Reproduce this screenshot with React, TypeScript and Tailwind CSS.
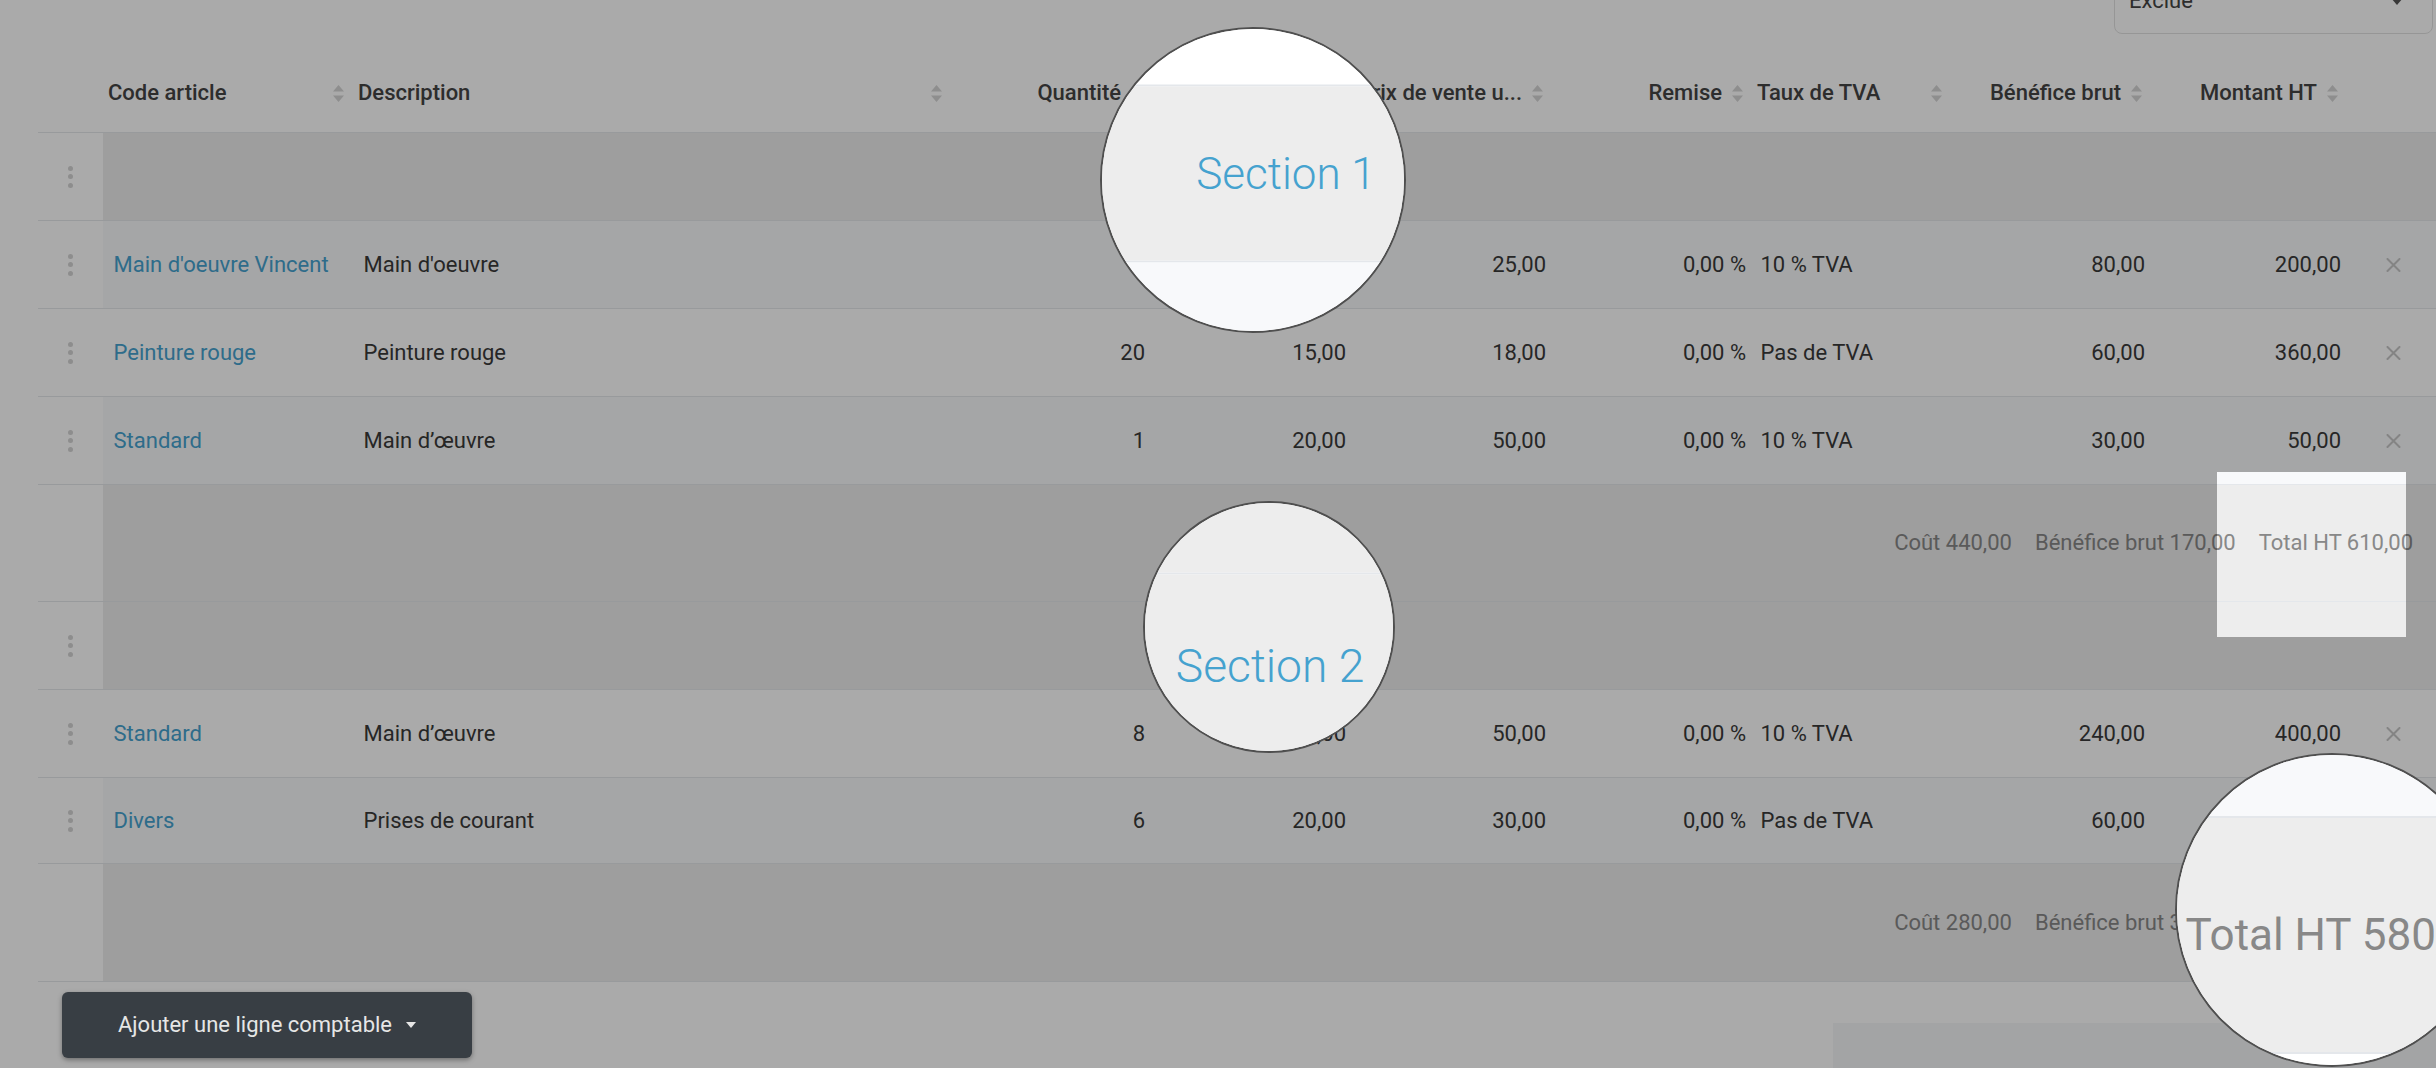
import React from "react";

type Row = {
  code: string;
  desc: string;
  qty: string;
  pa: string;
  pv: string;
  rem: string;
  tva: string;
  ben: string;
  mt: string;
};

const GRID =
  "flex-1 grid grid-cols-[254px_598px_200px_201px_200px_200px_199px_200px_196px_85px] items-center";

function SortIcon() {
  return (
    <svg width="11" height="17" viewBox="0 0 11 17" className="shrink-0">
      <path d="M0 6.5 L5.5 0 L11 6.5 Z" fill="#d6d6d6" />
      <path d="M0 10.5 L11 10.5 L5.5 17 Z" fill="#d6d6d6" />
    </svg>
  );
}

function Handle({ dots }: { dots?: boolean }) {
  return (
    <div className="w-[65px] shrink-0 bg-white flex items-center justify-center">
      {dots && (
        <div className="flex flex-col gap-[3.5px]">
          <span className="block w-[5px] h-[5px] rounded-full bg-[#d4d4d4]" />
          <span className="block w-[5px] h-[5px] rounded-full bg-[#d4d4d4]" />
          <span className="block w-[5px] h-[5px] rounded-full bg-[#d4d4d4]" />
        </div>
      )}
    </div>
  );
}

function DeleteIcon() {
  return (
    <svg width="15" height="14" viewBox="0 0 15 14">
      <path
        d="M1.5 1 L13.5 13 M13.5 1 L1.5 13"
        stroke="#c6c6c6"
        strokeWidth="2"
        strokeLinecap="round"
      />
    </svg>
  );
}

function ItemRow({ r, h, odd }: { r: Row; h: string; odd: boolean }) {
  return (
    <div className={`flex border-b border-[#e4e7eb] ${h}`}>
      <Handle dots />
      <div className={`flex-1 flex ${odd ? "bg-[#f8f9fb]" : "bg-white"}`}>
        <div className={GRID}>
          <div className="pl-[10.5px] text-[#45a2cf] whitespace-nowrap">{r.code}</div>
          <div className="pl-[6.5px] whitespace-nowrap">{r.desc}</div>
          <div className="text-right pr-[10px]">{r.qty}</div>
          <div className="text-right pr-[10px]">{r.pa}</div>
          <div className="text-right pr-[10px]">{r.pv}</div>
          <div className="text-right pr-[10px]">{r.rem}</div>
          <div className="pl-[4.5px] whitespace-nowrap">{r.tva}</div>
          <div className="text-right pr-[10px]">{r.ben}</div>
          <div className="text-right pr-[10px]">{r.mt}</div>
          <div className="flex justify-center">
            <DeleteIcon />
          </div>
        </div>
      </div>
    </div>
  );
}

function SectionRow({ title, h }: { title: string; h: string }) {
  return (
    <div className={`flex border-b border-[#e4e7eb] ${h}`}>
      <Handle dots />
      <div className="flex-1 bg-[#ededed] flex items-center justify-center text-[#45a2cf] font-light">
        {title}
      </div>
    </div>
  );
}

function SubtotalRow({
  cost,
  ben,
  total,
  h,
}: {
  cost: string;
  ben: string;
  total: string;
  h: string;
}) {
  return (
    <div className={`flex border-b border-[#e4e7eb] ${h}`}>
      <Handle />
      <div className="flex-1 bg-[#ededed] flex items-center justify-end gap-[23px] pr-[23px] text-[#888888] whitespace-nowrap">
        <span>Coût {cost}</span>
        <span>Bénéfice brut {ben}</span>
        <span>Total HT {total}</span>
      </div>
    </div>
  );
}

const section1: Row[] = [
  {
    code: "Main d'oeuvre Vincent",
    desc: "Main d'oeuvre",
    qty: "8",
    pa: "15,00",
    pv: "25,00",
    rem: "0,00 %",
    tva: "10 % TVA",
    ben: "80,00",
    mt: "200,00",
  },
  {
    code: "Peinture rouge",
    desc: "Peinture rouge",
    qty: "20",
    pa: "15,00",
    pv: "18,00",
    rem: "0,00 %",
    tva: "Pas de TVA",
    ben: "60,00",
    mt: "360,00",
  },
  {
    code: "Standard",
    desc: "Main d’œuvre",
    qty: "1",
    pa: "20,00",
    pv: "50,00",
    rem: "0,00 %",
    tva: "10 % TVA",
    ben: "30,00",
    mt: "50,00",
  },
];

const section2: Row[] = [
  {
    code: "Standard",
    desc: "Main d’œuvre",
    qty: "8",
    pa: "20,00",
    pv: "50,00",
    rem: "0,00 %",
    tva: "10 % TVA",
    ben: "240,00",
    mt: "400,00",
  },
  {
    code: "Divers",
    desc: "Prises de courant",
    qty: "6",
    pa: "20,00",
    pv: "30,00",
    rem: "0,00 %",
    tva: "Pas de TVA",
    ben: "60,00",
    mt: "180,00",
  },
];

function NumHead({ label }: { label: string }) {
  return (
    <div className="flex items-center justify-end gap-[10px] pr-[13px] whitespace-nowrap">
      <span>{label}</span>
      <SortIcon />
    </div>
  );
}

function Sheet() {
  return (
    <div className="w-[2436px] h-[1068px] bg-white [font-family:Roboto,sans-serif] text-[22px] leading-none text-[#3a3a3a] overflow-hidden">
      {/* top select */}
      <div className="flex justify-end pr-[3px]">
        <div className="-mt-[32px] h-[66px] w-[319px] border border-[#e2e2e2] rounded-[8px] flex items-center justify-between pl-[14px] pr-[29px] text-[#444444]">
          <span>Exclue</span>
          <svg width="12" height="7" viewBox="0 0 12 7">
            <path d="M0 0 L12 0 L6 7 Z" fill="#555555" />
          </svg>
        </div>
      </div>

      <div className="pl-[38px] mt-[16px]">
        {/* header */}
        <div className="flex h-[83px] pt-[4px] border-b border-[#e4e7eb] font-medium text-[#444444]">
          <div className="w-[65px] shrink-0" />
          <div className={GRID}>
            <div className="flex items-center justify-between pl-[5px] pr-[13px]">
              <span>Code article</span>
              <SortIcon />
            </div>
            <div className="flex items-center justify-between pl-[1px] pr-[13px]">
              <span>Description</span>
              <SortIcon />
            </div>
            <NumHead label="Quantité" />
            <NumHead label="Prix d'achat" />
            <NumHead label="Prix de vente u..." />
            <NumHead label="Remise" />
            <div className="flex items-center justify-between pl-[1px] pr-[13px]">
              <span>Taux de TVA</span>
              <SortIcon />
            </div>
            <NumHead label="Bénéfice brut" />
            <NumHead label="Montant HT" />
            <div />
          </div>
        </div>

        <SectionRow title="Section 1" h="h-[88px]" />
        <ItemRow r={section1[0]} h="h-[88px]" odd />
        <ItemRow r={section1[1]} h="h-[88px]" odd={false} />
        <ItemRow r={section1[2]} h="h-[88px]" odd />
        <SubtotalRow cost="440,00" ben="170,00" total="610,00" h="h-[117px]" />

        <SectionRow title="Section 2" h="h-[88px]" />
        <ItemRow r={section2[0]} h="h-[88px]" odd={false} />
        <ItemRow r={section2[1]} h="h-[86px]" odd />
        <SubtotalRow cost="280,00" ben="300,00" total="580,00" h="h-[118px]" />
      </div>

      {/* bottom */}
      <div className="flex items-start pl-[38px]">
        <button className="relative z-20 ml-[24px] mt-[10px] h-[66px] w-[410px] rounded-[6px] bg-[#383e44] text-[#e6e6e6] flex items-center justify-center gap-[14px] shadow-[0_2px_5px_rgba(0,0,0,0.35)]">
          <span>Ajouter une ligne comptable</span>
          <svg width="10" height="6" viewBox="0 0 10 6">
            <path d="M0 0 L10 0 L5 6 Z" fill="#e6e6e6" />
          </svg>
        </button>
        <div className="ml-auto mt-[41px] w-[603px] h-[60px] bg-[#f5f6f8]" />
      </div>
    </div>
  );
}

export default function App() {
  return (
    <div className="relative w-[2436px] h-[1068px] overflow-hidden">
      <Sheet />

      {/* dim overlay with rectangular spotlight */}
      <div className="absolute left-[2217px] top-[472px] w-[189px] h-[165px] z-10 pointer-events-none shadow-[0_0_0_4000px_rgba(0,0,0,0.333)]" />

      {/* magnifier 1 */}
      <div className="absolute left-[1100px] top-[26.5px] w-[306px] h-[306px] rounded-full overflow-hidden border-2 border-[#4f4f4f] z-30 bg-white">
        <div className="absolute left-[-1102px] top-[-28.5px] origin-[1253px_179.5px] scale-200">
          <Sheet />
        </div>
      </div>

      {/* magnifier 2 */}
      <div className="absolute left-[1143px] top-[501px] w-[252px] h-[252px] rounded-full overflow-hidden border-2 border-[#4f4f4f] z-30 bg-white">
        <div className="absolute left-[-1145px] top-[-503px] origin-[1269px_627px] scale-[2.1]">
          <Sheet />
        </div>
      </div>

      {/* magnifier 3 */}
      <div className="absolute left-[2175px] top-[753px] w-[314px] h-[314px] rounded-full overflow-hidden border-2 border-[#4f4f4f] z-30 bg-white">
        <div className="absolute left-[-2177px] top-[-755px] origin-[2332px_910px] scale-200">
          <Sheet />
        </div>
      </div>
    </div>
  );
}
